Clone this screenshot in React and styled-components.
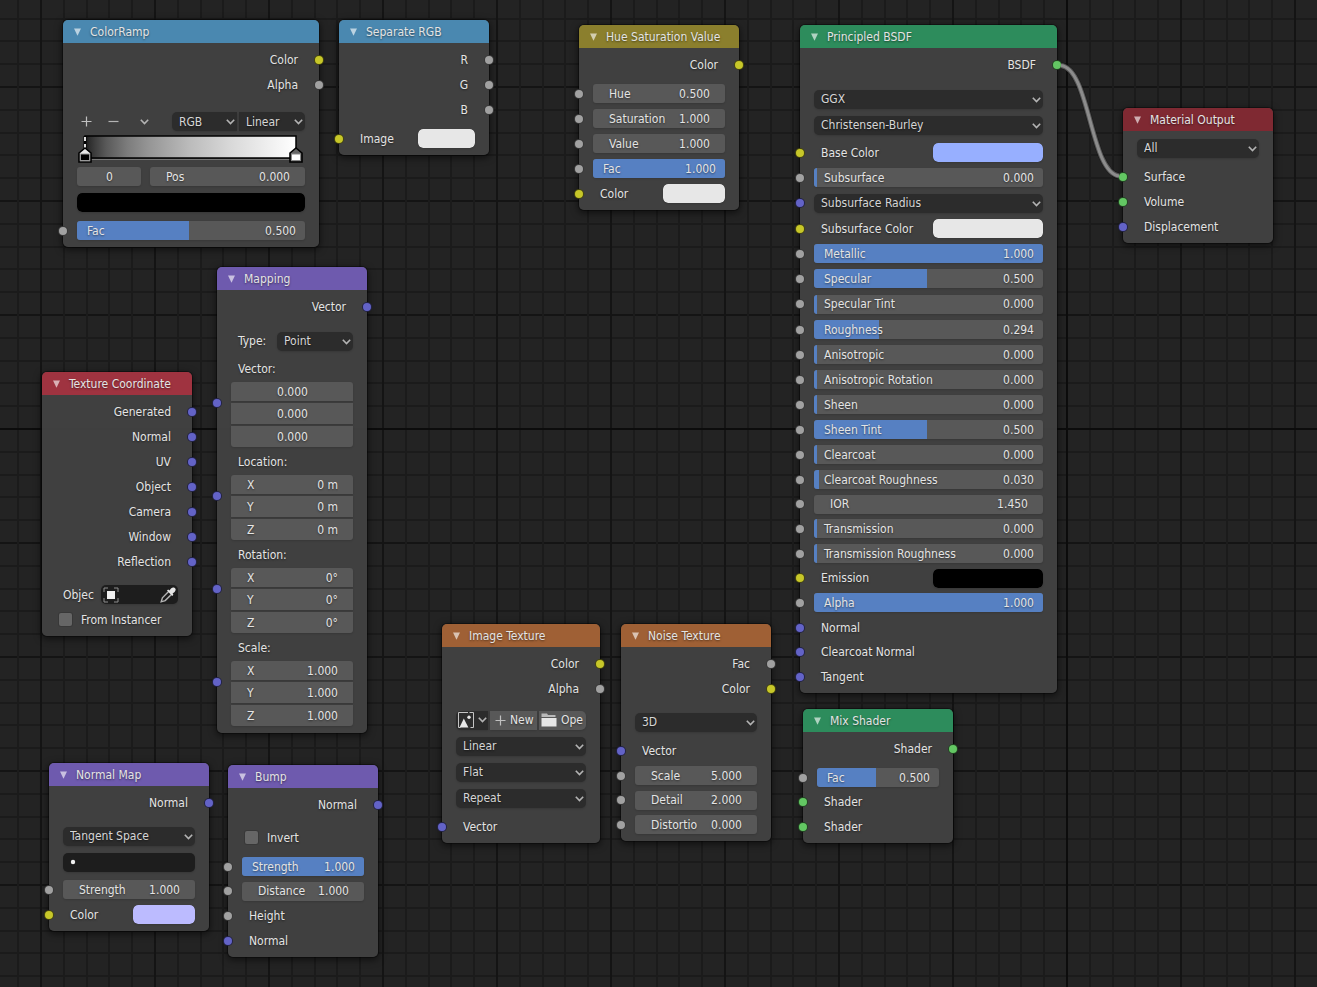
import React from 'react'
import styled, { createGlobalStyle, ThemeProvider } from 'styled-components'

const theme = {
  bg: '#232323',
  node: 'rgba(66, 66, 66, 0.95)',
  field: '#585858',
  menu: '#2c2c2c',
  well: '#1d1d1d',
  fill: '#5680c2',
  text: '#e4e4e4',
  icon: '#b4b4b4',
}

const HEADERS = {
  converter: '#4a88b0',
  color: '#8b7f2d',
  shader: '#2d8c5c',
  output: '#7f2932',
  input: '#9f3340',
  vector: '#6e5aae',
  texture: '#9f6035',
}

const SOCKETS = {
  color: '#c7c729',
  value: '#a1a1a1',
  vector: '#6363c7',
  shader: '#63c763',
}

const GlobalStyle = createGlobalStyle`
  *, *::before, *::after {
    box-sizing: border-box;
  }
  body {
    margin: 0;
    background: ${theme.bg};
  }
  button, input, select {
    margin: 0;
    padding: 0;
    border: 0;
    outline: none;
    color: inherit;
    font: inherit;
    text-shadow: inherit;
  }
`

const minor = '#1b1b1b'
const major = '#141414'

const gridStops = `
  ${major} 0 2px, transparent 2px 23px,
  ${minor} 23px 25px, transparent 25px 46px,
  ${minor} 46px 48px, transparent 48px 68px,
  ${minor} 68px 70px, transparent 70px 91px,
  ${minor} 91px 93px, transparent 93px`

const Canvas = styled.main`
  position: relative;
  min-height: 100vh;
  overflow: hidden;
  color: ${({ theme }) => theme.text};
  font-family: 'DejaVu Sans Condensed', 'DejaVu Sans', Verdana, sans-serif;
  font-size: 12px;
  line-height: 16px;
  text-shadow: 0 1px 2px rgba(0, 0, 0, 0.5);
  background-color: ${({ theme }) => theme.bg};
  background-image: linear-gradient(#0c0c0c, #0c0c0c), linear-gradient(#0c0c0c, #0c0c0c),
    linear-gradient(90deg, ${gridStops}), linear-gradient(180deg, ${gridStops});
  background-size: 2px 100%, 100% 2px, 114px 114px, 114px 114px;
  background-position: 1066px 0, 0 428px, 40px 86px, 40px 86px;
  background-repeat: no-repeat, no-repeat, repeat, repeat;
`

const NodeBox = styled.section`
  position: absolute;
  left: ${({ $x }) => $x}px;
  top: ${({ $y }) => $y}px;
  width: ${({ $width }) => $width}px;
  padding-bottom: ${({ $bottom }) => $bottom}px;
  border-radius: 5px;
  background: ${({ theme }) => theme.node};
  box-shadow: 0 0 0 1px rgba(0, 0, 0, 0.35), 0 2px 7px 1px rgba(0, 0, 0, 0.55);
`

const NodeHeader = styled.header`
  display: flex;
  align-items: center;
  height: 23px;
  margin-bottom: 4px;
  padding-left: 11px;
  gap: 9px;
  border-radius: 5px 5px 0 0;
  background: ${({ $kind }) => HEADERS[$kind]};
  white-space: nowrap;
`

const Title = styled.h2`
  margin: 0;
  font-size: inherit;
  font-weight: 400;
`

const IconButton = styled.button`
  display: flex;
  align-items: center;
  justify-content: center;
  height: 19px;
  background: none;
  cursor: pointer;
`

const Row = styled.div`
  position: relative;
  display: flex;
  align-items: center;
  justify-content: ${({ $end }) => ($end ? 'flex-end' : 'flex-start')};
  height: ${({ $h }) => $h || 25}px;
  margin-top: ${({ $gap }) => $gap || 0}px;
  padding: 0 14px;
`

// sits on the edge of the node, half outside of it
const Socket = styled.i`
  position: absolute;
  top: ${({ $top }) => $top || '50%'};
  ${({ $side }) => $side}: -5px;
  width: 10px;
  height: 10px;
  margin-top: -5px;
  border: 1px solid rgba(0, 0, 0, 0.65);
  border-radius: 50%;
  background: ${({ $type }) => SOCKETS[$type]};
`

const Label = styled.span`
  padding: 0 7px;
  white-space: nowrap;
`

const FieldBox = styled.label`
  position: relative;
  display: flex;
  align-items: center;
  flex: 1 1 0;
  min-width: 0;
  height: ${({ $h }) => $h || 19}px;
  padding: ${({ $slider }) => ($slider ? '0 9px 0 10px' : '0 15px 0 16px')};
  overflow: hidden;
  border-radius: ${({ $radius }) => $radius || '3px'};
  background: ${({ theme }) => theme.field};
  box-shadow: 0 1px 2px rgba(0, 0, 0, 0.15);
`

const Fill = styled.span`
  position: absolute;
  left: 0;
  top: 0;
  bottom: 0;
  background: ${({ theme }) => theme.fill};
`

const FieldName = styled.span`
  position: relative;
  flex: 1 1 0;
  white-space: nowrap;
`

const FieldInput = styled.input`
  position: relative;
  width: ${({ $center }) => ($center ? '100%' : '38px')};
  height: 16px;
  background: none;
  text-align: ${({ $center }) => ($center ? 'center' : 'right')};
`

const MenuBox = styled.span`
  position: relative;
  display: flex;
  flex: ${({ $width }) => ($width ? `0 0 ${$width}px` : '1 1 0')};
  height: 19px;
  color: #d6d6d6;

  > svg {
    position: absolute;
    right: 2px;
    top: 7px;
    pointer-events: none;
  }
`

const Select = styled.select`
  appearance: none;
  width: 100%;
  height: 19px;
  padding: 0 12px 0 7px;
  border-radius: ${({ $radius }) => $radius || '5px'};
  background: ${({ theme }) => theme.menu};
  box-shadow: 0 1px 2px rgba(0, 0, 0, 0.15);
`

const ColorInput = styled.input`
  appearance: none;
  display: block;
  flex: ${({ $wide }) => ($wide ? '1 1 0' : '0 0 calc(50% - 4px)')};
  height: 19px;
  margin-left: ${({ $wide }) => ($wide ? '0' : 'auto')};
  overflow: hidden;
  border-radius: 5px;
  background: none;
  box-shadow: 0 1px 2px rgba(0, 0, 0, 0.15);

  &::-webkit-color-swatch-wrapper {
    padding: 0;
  }
  &::-webkit-color-swatch {
    border: 0;
    border-radius: 5px;
  }
`

const ColorRow = styled.label`
  display: flex;
  flex: 1 1 0;
  align-items: center;
`

const Well = styled.span`
  display: flex;
  align-items: center;
  flex: ${({ $width }) => ($width ? `0 0 ${$width}px` : '1 1 0')};
  min-width: 0;
  height: 19px;
  margin-left: auto;
  padding: 0 2px;
  border-radius: 5px;
  background: ${({ theme }) => theme.well};
  box-shadow: 0 1px 2px rgba(0, 0, 0, 0.15);

  svg {
    flex: none;
  }
`

const WellInput = styled.input`
  flex: 1 1 0;
  width: 0;
  min-width: 0;
  background: none;
`

const CheckLabel = styled.label`
  display: flex;
  align-items: center;
  gap: 9px;
  padding-left: 3px;
`

const CheckBox = styled.input`
  appearance: none;
  width: 13px;
  height: 13px;
  border-radius: 2px;
  background: #666;
  box-shadow: 0 0 0 1px rgba(0, 0, 0, 0.12);
`

const VectorGroup = styled.fieldset`
  position: relative;
  display: grid;
  grid-template-rows: 26px 19px 21px 21px;
  row-gap: 2px;
  height: 93px;
  min-width: 0;
  margin: 0;
  padding: 0 14px;
  border: 0;
`

const VectorName = styled.div`
  padding: 0 7px;
  line-height: 30px;
`

const Tools = styled.div`
  display: grid;
  grid-template-columns: 19px 34px 28px;
  margin-right: auto;
`

const MenuPair = styled.div`
  display: flex;
  gap: 2px;
  margin-left: auto;
`

const RampBox = styled.div`
  height: 30px;
  padding-left: 14px;

  svg {
    display: block;
  }
`

const Pair = styled.div`
  display: grid;
  grid-template-columns: 64px 1fr;
  gap: 9px;
  flex: 1 1 0;
`

const ButtonGroup = styled.div`
  display: grid;
  grid-template-columns: 32px 47px 1fr;
  gap: 2px;
  flex: 1 1 0;
`

const ToolButton = styled.button`
  display: flex;
  align-items: center;
  gap: 4px;
  height: 19px;
  padding-left: ${({ $pad }) => $pad}px;
  overflow: hidden;
  white-space: nowrap;
  border-radius: ${({ $radius }) => $radius || '0'};
  background: ${({ theme, $dark }) => ($dark ? theme.menu : theme.field)};
  box-shadow: 0 1px 2px rgba(0, 0, 0, 0.15);
  cursor: pointer;

  svg {
    flex: none;
  }
`

const Wire = styled.svg`
  position: absolute;
  left: 1050px;
  top: 55px;
  pointer-events: none;
`

function Chevron() {
  return (
    <svg width="9" height="6" viewBox="0 0 9 6" fill="none" stroke={theme.icon} strokeWidth="1.6">
      <path d="M0.8 0.8 L4.5 4.6 L8.2 0.8" />
    </svg>
  )
}

function PlusIcon() {
  return (
    <svg width="11" height="11" viewBox="0 0 11 11" stroke="#c0c0c0" strokeWidth="1.2">
      <path d="M5.5 0.5 V10.5 M0.5 5.5 H10.5" />
    </svg>
  )
}

function MinusIcon() {
  return (
    <svg width="11" height="11" viewBox="0 0 11 11" stroke={theme.icon} strokeWidth="1.2">
      <path d="M0.5 5.5 H10.5" />
    </svg>
  )
}

function ImageIcon() {
  return (
    <svg width="16" height="16" viewBox="0 0 16 16">
      <path d="M10 0.5 H0.5 V15.5 H2.5 M11.5 0.5 H15.5 V15.5 H12.5" fill="none" stroke="#c4c4c4" />
      <path d="M1.5 15.5 L5.8 6.5 L10.4 15.5 Z" fill="#e6e6e6" />
      <circle cx="11" cy="5.2" r="1.7" fill="#e6e6e6" />
    </svg>
  )
}

function FolderIcon() {
  return (
    <svg width="16" height="14" viewBox="0 0 16 14">
      <path d="M0.5 0.5 H6 L7 2 H14.5 V4 H0.5 Z" fill="#b9b9b9" />
      <path d="M0.5 5 H15.5 V13.5 H0.5 Z" fill="#e6e6e6" />
    </svg>
  )
}

function ObjectIcon() {
  return (
    <svg width="16" height="16" viewBox="0 0 16 16">
      <rect x="4" y="4" width="8" height="8" fill="#f0f0f0" />
      <path
        d="M1 5 V1 H5 M11 1 H15 V5 M15 11 V15 H11 M5 15 H1 V11"
        fill="none"
        stroke="#8f8f8f"
      />
    </svg>
  )
}

function EyedropperIcon() {
  return (
    <svg width="16" height="16" viewBox="0 0 16 16">
      <path
        d="M8.6 4.6 L2.4 10.8 L1.2 14.8 L5.2 13.6 L11.4 7.4"
        fill="none"
        stroke="#b4b4b4"
        strokeWidth="1.4"
      />
      <path
        d="M7 3.6 L8.2 2.6 L9.4 3.4 L11 1.4 C12.8 -0.2 15 0.4 15.6 2 C15.8 3.2 15.4 4.2 14.6 5 L12.6 6.6 L13.4 7.8 L12.2 9 Z"
        fill="#e6e6e6"
      />
    </svg>
  )
}

function ColorBand() {
  const stops = [
    [0, 20], [2, 45], [5, 63], [10, 89], [20, 124], [30, 149], [50, 188], [70, 218], [100, 255],
  ]
  return (
    <svg width="232" height="30" viewBox="0 0 232 30" role="img" aria-label="Color band">
      <defs>
        <linearGradient id="band">
          {stops.map(([at, c]) => (
            <stop key={at} offset={`${at}%`} stopColor={`rgb(${c},${c},${c})`} />
          ))}
        </linearGradient>
      </defs>
      <rect x="8" y="2" width="211" height="22" fill="url(#band)" stroke="#000" strokeWidth="1.5" />
      <path d="M9 25.5 H219" stroke="#777" />
      <path d="M8 2 V14" stroke="#000" strokeWidth="3" />
      <path d="M8 3 V14" stroke="#ddd" strokeWidth="2" strokeDasharray="4 3" />
      <path d="M2 28 V19 L8 14 L14 19 V28 Z" fill="#e8e8e8" stroke="#000" strokeWidth="1.6" />
      <rect x="3.5" y="20" width="9" height="6.5" fill="#000" stroke="#999" />
      <path d="M213 28 V19 L219 14 L225 19 V28 Z" fill="#666" stroke="#000" strokeWidth="1.6" />
      <rect x="214.5" y="20" width="9" height="6.5" fill="#fff" stroke="#888" />
    </svg>
  )
}

function Node({ title, kind, x, y, width = 150, bottom = 4, children }) {
  return (
    <NodeBox $x={x} $y={y} $width={width} $bottom={bottom}>
      <NodeHeader $kind={kind}>
        <IconButton aria-label={`Collapse ${title}`}>
          <svg width="7" height="8" viewBox="0 0 7 8">
            <path d="M0 0.5 H7 L3.5 7.8 Z" fill="#fff" fillOpacity="0.62" />
          </svg>
        </IconButton>
        <Title>{title}</Title>
      </NodeHeader>
      {children}
    </NodeBox>
  )
}

function Output({ name, type }) {
  return (
    <Row $end>
      <Label>{name}</Label>
      <Socket $side="right" $type={type} />
    </Row>
  )
}

function Input({ name, type, h, gap }) {
  return (
    <Row $h={h} $gap={gap}>
      <Socket $side="left" $type={type} />
      <Label>{name}</Label>
    </Row>
  )
}

function Field({ name, value, slider, h, radius, center }) {
  const amount = Number(value)
  const width = amount >= 1 ? '100%' : `max(3px, calc(${amount * 100}% - 2px))`
  return (
    <FieldBox $slider={slider} $h={h} $radius={radius}>
      {slider && <Fill style={{ width }} />}
      {!center && <FieldName>{name}</FieldName>}
      <FieldInput $center={center} aria-label={name} defaultValue={value} />
    </FieldBox>
  )
}

function ValueInput({ name, value, slider, h, gap }) {
  return (
    <Row $h={h} $gap={gap}>
      <Socket $side="left" $type="value" />
      <Field name={name} value={value} slider={slider} />
    </Row>
  )
}

function ColorSocket({ name, value, h, gap }) {
  return (
    <Row $h={h} $gap={gap}>
      <Socket $side="left" $type="color" />
      <ColorRow>
        <Label>{name}</Label>
        <ColorInput type="color" defaultValue={value} />
      </ColorRow>
    </Row>
  )
}

function Menu({ label, value, width, radius }) {
  return (
    <MenuBox $width={width}>
      <Select aria-label={label} $radius={radius} defaultValue={value}>
        <option>{value}</option>
      </Select>
      <Chevron />
    </MenuBox>
  )
}

function MenuRow({ gap, ...rest }) {
  return (
    <Row $h={26} $gap={gap}>
      <Menu {...rest} />
    </Row>
  )
}

function VectorInput({ name, values, axes = true }) {
  const radii = ['3px 3px 0 0', '0', '0 0 3px 3px']
  return (
    <VectorGroup aria-label={name}>
      <Socket $side="left" $type="vector" $top="49px" />
      <VectorName>{name}:</VectorName>
      {values.map((value, i) => (
        <Field
          key={i}
          name={'XYZ'[i]}
          value={value}
          center={!axes}
          h={i ? 21 : 19}
          radius={radii[i]}
        />
      ))}
    </VectorGroup>
  )
}

function PrincipledNode() {
  return (
    <Node title="Principled BSDF" kind="shader" x={800} y={25} width={257}>
      <Output name="BSDF" type="shader" />
      <MenuRow gap={9} label="Distribution" value="GGX" />
      <MenuRow label="Subsurface Method" value="Christensen-Burley" />
      <ColorSocket gap={2} name="Base Color" value="#97afff" />
      <ValueInput slider name="Subsurface" value="0.000" />
      <Row $h={26}>
        <Socket $side="left" $type="vector" />
        <Menu label="Subsurface Radius" value="Subsurface Radius" />
      </Row>
      <ColorSocket name="Subsurface Color" value="#e7e7e7" />
      <ValueInput slider name="Metallic" value="1.000" />
      <ValueInput slider name="Specular" value="0.500" />
      <ValueInput slider name="Specular Tint" value="0.000" h={26} />
      <ValueInput slider name="Roughness" value="0.294" />
      <ValueInput slider name="Anisotropic" value="0.000" />
      <ValueInput slider name="Anisotropic Rotation" value="0.000" />
      <ValueInput slider name="Sheen" value="0.000" />
      <ValueInput slider name="Sheen Tint" value="0.500" />
      <ValueInput slider name="Clearcoat" value="0.000" />
      <ValueInput slider name="Clearcoat Roughness" value="0.030" />
      <ValueInput name="IOR" value="1.450" h={24} />
      <ValueInput slider name="Transmission" value="0.000" />
      <ValueInput slider name="Transmission Roughness" value="0.000" />
      <ColorSocket name="Emission" value="#000000" h={24} />
      <ValueInput slider name="Alpha" value="1.000" />
      <Input name="Normal" type="vector" />
      <Input name="Clearcoat Normal" type="vector" h={24} />
      <Input name="Tangent" type="vector" />
    </Node>
  )
}

export default function App() {
  return (
    <ThemeProvider theme={theme}>
      <GlobalStyle />
      <Canvas>
        <Node title="ColorRamp" kind="converter" x={63} y={20} width={256}>
          <Output name="Color" type="color" />
          <Output name="Alpha" type="value" />
          <Row $gap={12}>
            <Tools>
              <IconButton aria-label="Add stop">
                <PlusIcon />
              </IconButton>
              <IconButton aria-label="Delete stop">
                <MinusIcon />
              </IconButton>
              <IconButton aria-label="Tools">
                <Chevron />
              </IconButton>
            </Tools>
            <MenuPair>
              <Menu label="Color Mode" value="RGB" width={65} radius="5px 0 0 5px" />
              <Menu label="Interpolation" value="Linear" width={66} radius="0 5px 5px 0" />
            </MenuPair>
          </Row>
          <RampBox>
            <ColorBand />
          </RampBox>
          <Row>
            <Pair>
              <Field name="Stop" value="0" center />
              <Field name="Pos" value="0.000" />
            </Pair>
          </Row>
          <Row $gap={1}>
            <ColorInput type="color" aria-label="Stop color" $wide defaultValue="#000000" />
          </Row>
          <ValueInput slider gap={3} name="Fac" value="0.500" />
        </Node>

        <Node title="Separate RGB" kind="converter" x={339} y={20}>
          <Output name="R" type="value" />
          <Output name="G" type="value" />
          <Output name="B" type="value" />
          <ColorSocket gap={4} name="Image" value="#e7e7e7" />
        </Node>

        <Node title="Hue Saturation Value" kind="color" x={579} y={25} width={160}>
          <Output name="Color" type="color" />
          <ValueInput gap={4} name="Hue" value="0.500" />
          <ValueInput name="Saturation" value="1.000" />
          <ValueInput name="Value" value="1.000" />
          <ValueInput slider name="Fac" value="1.000" />
          <ColorSocket name="Color" value="#e7e7e7" />
        </Node>

        <PrincipledNode />

        <Node title="Material Output" kind="output" x={1123} y={108}>
          <MenuRow label="Target" value="All" />
          <Input gap={3} name="Surface" type="shader" />
          <Input name="Volume" type="shader" />
          <Input name="Displacement" type="vector" />
        </Node>

        <Node title="Texture Coordinate" kind="input" x={42} y={372}>
          {['Generated', 'Normal', 'UV', 'Object', 'Camera', 'Window', 'Reflection'].map((name) => (
            <Output key={name} name={name} type="vector" />
          ))}
          <Row $gap={8}>
            <Label>Objec</Label>
            <Well $width={77}>
              <ObjectIcon />
              <WellInput aria-label="Object" />
              <IconButton aria-label="Pick object">
                <EyedropperIcon />
              </IconButton>
            </Well>
          </Row>
          <Row>
            <CheckLabel>
              <CheckBox type="checkbox" />
              From Instancer
            </CheckLabel>
          </Row>
        </Node>

        <Node title="Mapping" kind="vector" x={217} y={267} bottom={7}>
          <Output name="Vector" type="vector" />
          <Row $h={26} $gap={9}>
            <Label>Type:</Label>
            <MenuPair>
              <Menu label="Type" value="Point" width={76} />
            </MenuPair>
          </Row>
          <VectorInput name="Vector" values={['0.000', '0.000', '0.000']} axes={false} />
          <VectorInput name="Location" values={['0 m', '0 m', '0 m']} />
          <VectorInput name="Rotation" values={['0°', '0°', '0°']} />
          <VectorInput name="Scale" values={['1.000', '1.000', '1.000']} />
        </Node>

        <Node title="Image Texture" kind="texture" x={442} y={624} width={158}>
          <Output name="Color" type="color" />
          <Output name="Alpha" type="value" />
          <Row $h={26} $gap={6}>
            <ButtonGroup>
              <ToolButton $dark $pad={2} $radius="5px 0 0 5px" aria-label="Browse image">
                <ImageIcon />
                <Chevron />
              </ToolButton>
              <ToolButton $pad={5}>
                <PlusIcon />
                New
              </ToolButton>
              <ToolButton $pad={2} $radius="0 5px 5px 0">
                <FolderIcon />
                Ope
              </ToolButton>
            </ButtonGroup>
          </Row>
          <MenuRow label="Interpolation" value="Linear" />
          <MenuRow label="Projection" value="Flat" />
          <MenuRow label="Extension" value="Repeat" />
          <Input gap={3} name="Vector" type="vector" />
        </Node>

        <Node title="Noise Texture" kind="texture" x={621} y={624}>
          <Output name="Fac" type="value" />
          <Output name="Color" type="color" />
          <MenuRow gap={8} label="Dimensions" value="3D" />
          <Input gap={3} name="Vector" type="vector" />
          <ValueInput name="Scale" value="5.000" />
          <ValueInput name="Detail" value="2.000" h={24} />
          <ValueInput name="Distortio" value="0.000" />
        </Node>

        <Node title="Mix Shader" kind="shader" x={803} y={709}>
          <Output name="Shader" type="shader" />
          <ValueInput slider gap={4} name="Fac" value="0.500" />
          <Input name="Shader" type="shader" h={24} />
          <Input name="Shader" type="shader" />
        </Node>

        <Node title="Normal Map" kind="vector" x={49} y={763} width={160}>
          <Output name="Normal" type="vector" />
          <MenuRow gap={8} label="Space" value="Tangent Space" />
          <Row $h={26}>
            <Well>
              <svg width="16" height="16" viewBox="0 0 16 16">
                <circle cx="8" cy="8" r="2.2" fill="#f0f0f0" />
              </svg>
              <WellInput aria-label="UV Map" />
            </Well>
          </Row>
          <ValueInput gap={2} name="Strength" value="1.000" />
          <ColorSocket name="Color" value="#bcbbff" />
        </Node>

        <Node title="Bump" kind="vector" x={228} y={765}>
          <Output name="Normal" type="vector" />
          <Row $gap={8}>
            <CheckLabel>
              <CheckBox type="checkbox" />
              Invert
            </CheckLabel>
          </Row>
          <ValueInput slider gap={4} name="Strength" value="1.000" />
          <ValueInput name="Distance" value="1.000" h={24} />
          <Input name="Height" type="value" />
          <Input name="Normal" type="vector" />
        </Node>

        <Wire width="80" height="132" viewBox="0 0 80 132" fill="none">
          <path d="M11 10.5 C40 14 40 117 69 121" stroke="#000" strokeOpacity="0.35" strokeWidth="6" />
          <path d="M11 10.5 C40 14 40 117 69 121" stroke="#808080" strokeWidth="5" strokeOpacity="0.6" />
          <path d="M11 10.5 C40 14 40 117 69 121" stroke="#8c8c8c" strokeWidth="3" />
        </Wire>
      </Canvas>
    </ThemeProvider>
  )
}
